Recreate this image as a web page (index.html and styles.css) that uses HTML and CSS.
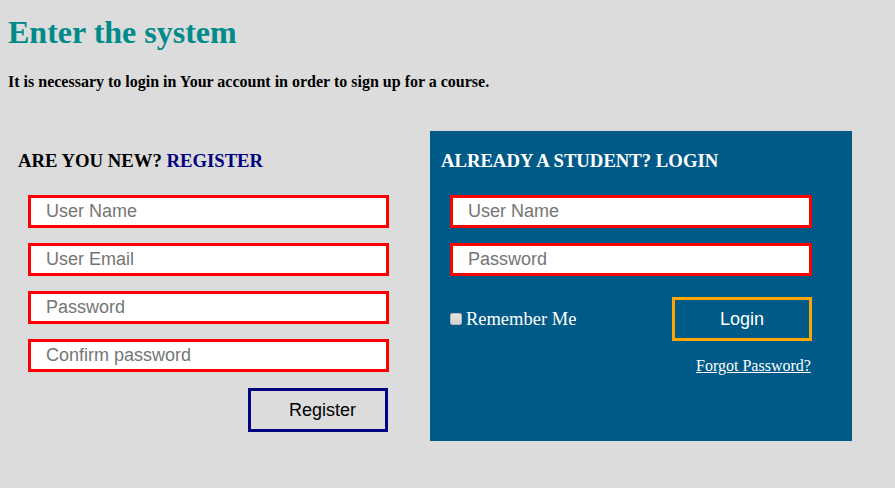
FILE: index.html
```html
<!DOCTYPE html>
<html lang="en">
<head>
<meta charset="utf-8">
<title>Enter the system</title>
<link rel="stylesheet" href="styles.css">
</head>
<body>
<div class="page">
  <h1 class="title">Enter the system</h1>
  <p class="intro">It is necessary to login in Your account in order to sign up for a course.</p>
  <div class="panels">
    <section class="panel panel-register">
      <h3 class="panel-title">ARE YOU NEW? <span class="accent">REGISTER</span></h3>
      <form class="form">
        <input class="field" type="text" placeholder="User Name">
        <input class="field" type="email" placeholder="User Email">
        <input class="field" type="password" placeholder="Password">
        <input class="field" type="password" placeholder="Confirm password">
        <div class="actions">
          <button class="btn btn-register" type="button">Register</button>
        </div>
      </form>
    </section>
    <section class="panel panel-login">
      <h3 class="panel-title">ALREADY A STUDENT? LOGIN</h3>
      <form class="form">
        <input class="field" type="text" placeholder="User Name">
        <input class="field" type="password" placeholder="Password">
        <div class="login-row">
          <label class="remember"><input class="check" type="checkbox">Remember Me</label>
          <button class="btn btn-login" type="button">Login</button>
        </div>
        <div class="forgot-row"><a class="forgot" href="#">Forgot Password?</a></div>
      </form>
    </section>
  </div>
</div>
</body>
</html>
```

FILE: styles.css
```css
html, body {
  margin: 0;
  padding: 0;
  background: #dcdcdc;
}
body {
  font-family: "Liberation Serif", "Times New Roman", serif;
  color: #000;
}
.page {
  padding: 0 8px;
}
.title {
  margin: 14px 0 0;
  font-size: 32px;
  line-height: 37px;
  font-weight: bold;
  color: #008b8b;
}
.intro {
  margin: 22px 0 0;
  font-size: 16px;
  line-height: 18px;
  font-weight: bold;
}
.panels {
  display: flex;
  margin-top: 40px;
}
.panel {
  width: 48%;
  min-height: 310px;
  box-sizing: border-box;
  padding: 19px 10px 0;
}
.panel-login {
  background: #005a87;
  color: #fff;
  padding-left: 11px;
}
.panel-title {
  margin: 0;
  font-size: 18.72px;
  line-height: 21px;
  font-weight: bold;
}
.accent {
  color: #000080;
}
.form {
  margin: 24px 0 0 10px;
  width: 361px;
  display: flex;
  flex-direction: column;
  gap: 15px;
}
.panel-login .form {
  margin-left: 9px;
  width: 362px;
}
.field {
  display: block;
  box-sizing: border-box;
  width: 361px;
  height: 33px;
  margin: 0;
  padding: 0 0 0 15px;
  border: 3px solid #ff0000;
  background: #fff;
  font-family: "Liberation Sans", Arial, sans-serif;
  font-size: 18px;
  color: #000;
  outline: none;
}
.panel-login .field {
  width: 362px;
}
.field::placeholder {
  color: #757575;
}
.actions {
  display: flex;
  justify-content: flex-end;
  margin-top: 1px;
  padding-right: 1px;
}
.btn {
  box-sizing: border-box;
  width: 140px;
  height: 44px;
  margin: 0;
  background: transparent;
  font-family: "Liberation Sans", Arial, sans-serif;
  font-size: 18px;
  cursor: pointer;
}
.btn-register {
  border: 3px solid #000080;
  color: #000;
  padding: 0 0 0 9px;
}
.btn-login {
  border: 3px solid #ffa500;
  color: #fff;
  padding: 0;
}
.login-row {
  display: flex;
  justify-content: space-between;
  align-items: center;
  margin-top: 6px;
}
.remember {
  display: flex;
  align-items: center;
  font-size: 18.5px;
  line-height: 21px;
  color: #fff;
}
.check {
  appearance: none;
  -webkit-appearance: none;
  box-sizing: border-box;
  width: 12px;
  height: 12px;
  margin: 0 4px 0 0;
  border: 1px solid #b5b5b5;
  border-radius: 2px;
  background: linear-gradient(#e4e4e4, #d2d2d2);
}
.forgot-row {
  display: flex;
  justify-content: flex-end;
  margin-top: 1px;
  padding-right: 1px;
  line-height: 18px;
}
.forgot {
  color: #fff;
  font-size: 16px;
  text-decoration: underline;
}
```
